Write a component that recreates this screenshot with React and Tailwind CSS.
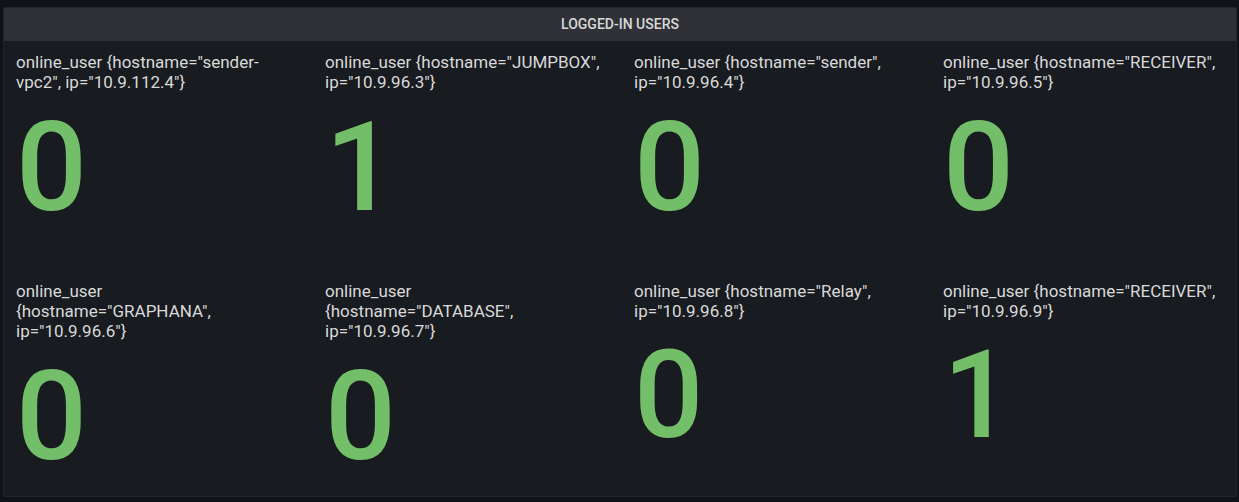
import React from "react";

const stats = [
  { label: 'online_user {hostname="sender-vpc2", ip="10.9.112.4"}', value: "0" },
  { label: 'online_user {hostname="JUMPBOX", ip="10.9.96.3"}', value: "1" },
  { label: 'online_user {hostname="sender", ip="10.9.96.4"}', value: "0" },
  { label: 'online_user {hostname="RECEIVER", ip="10.9.96.5"}', value: "0" },
  { label: 'online_user {hostname="GRAPHANA", ip="10.9.96.6"}', value: "0" },
  { label: 'online_user {hostname="DATABASE", ip="10.9.96.7"}', value: "0" },
  { label: 'online_user {hostname="Relay", ip="10.9.96.8"}', value: "0", small: true },
  { label: 'online_user {hostname="RECEIVER", ip="10.9.96.9"}', value: "1", small: true },
];

const StatCell = ({ label, value, small }) => (
  <div className="flex flex-col pt-[11px] pl-3 pr-[21px] min-w-0">
    <div className="text-[17px] leading-[20px] text-[#d8d9da]">{label}</div>
    {small ? (
      <div className="mt-[14px] text-[122px] leading-none font-medium text-[#73bf69]">{value}</div>
    ) : (
      <div className="mt-[13px] text-[125px] leading-none font-medium text-[#73bf69]">{value}</div>
    )}
  </div>
);

const App = () => {
  return (
    <div
      className="w-[1239px] h-[502px] bg-[#111217] pt-[7px] pl-[3px] overflow-hidden"
      style={{ fontFamily: "Roboto, 'Liberation Sans', sans-serif" }}
    >
      <div className="w-[1234px] h-[490px] flex flex-col bg-[#181b1f] border border-[#23252b] rounded-[2px] overflow-hidden">
        <div className="h-[33px] shrink-0 flex items-center justify-center bg-[#2f3136] text-[14px] font-medium text-[#d8d9da]">
          LOGGED-IN USERS
        </div>
        <div className="flex-1 grid grid-cols-[repeat(4,309px)] grid-rows-[229px_1fr]">
          {stats.map((s, i) => (
            <StatCell key={i} {...s} />
          ))}
        </div>
      </div>
    </div>
  );
};

export default App;
